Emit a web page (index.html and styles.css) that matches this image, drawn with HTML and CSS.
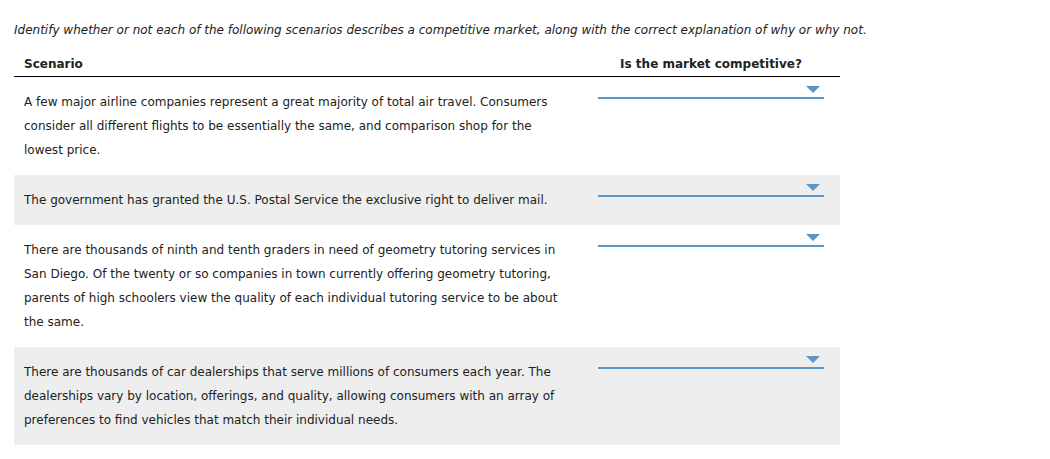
FILE: index.html
```html
<!DOCTYPE html>
<html lang="en">
<head>
  <meta charset="UTF-8">
  <title>Competitive Markets</title>
  <link rel="stylesheet" href="styles.css">
</head>
<body>
  <p class="intro">Identify whether or not each of the following scenarios describes a competitive market, along with the correct explanation of why or why not.</p>

  <table class="scenarios">
    <thead>
      <tr>
        <th class="col-scenario">Scenario</th>
        <th class="col-answer">Is the market competitive?</th>
      </tr>
    </thead>
    <tbody>
      <tr>
        <td class="col-scenario">A few major airline companies represent a great majority of total air travel. Consumers consider all different flights to be essentially the same, and comparison shop for the lowest price.</td>
        <td class="col-answer"><div class="dropdown"><span class="caret"></span></div></td>
      </tr>
      <tr class="shaded">
        <td class="col-scenario">The government has granted the U.S. Postal Service the exclusive right to deliver mail.</td>
        <td class="col-answer"><div class="dropdown"><span class="caret"></span></div></td>
      </tr>
      <tr>
        <td class="col-scenario">There are thousands of ninth and tenth graders in need of geometry tutoring services in San Diego. Of the twenty or so companies in town currently offering geometry tutoring, parents of high schoolers view the quality of each individual tutoring service to be about the same.</td>
        <td class="col-answer"><div class="dropdown"><span class="caret"></span></div></td>
      </tr>
      <tr class="shaded">
        <td class="col-scenario">There are thousands of car dealerships that serve millions of consumers each year. The dealerships vary by location, offerings, and quality, allowing consumers with an array of preferences to find vehicles that match their individual needs.</td>
        <td class="col-answer"><div class="dropdown"><span class="caret"></span></div></td>
      </tr>
    </tbody>
  </table>
</body>
</html>
```

FILE: styles.css
```css
body {
  margin: 0;
  font-family: Verdana, "DejaVu Sans", sans-serif;
  font-size: 12px;
  color: #222;
  background: #fff;
}
.intro {
  margin: 21px 14px 0;
  line-height: 18px;
  font-style: italic;
}
.scenarios {
  margin: 11px 0 0 14px;
  width: 826px;
  border-collapse: collapse;
  table-layout: fixed;
}
th, td {
  box-sizing: border-box;
}
.col-scenario {
  width: 566px;
}
.col-answer {
  width: 260px;
}
th {
  padding: 5px 0 3px;
  line-height: 18px;
  font-weight: bold;
  border-bottom: 1px solid #000;
}
th.col-scenario {
  text-align: left;
  padding-left: 10px;
}
th.col-answer {
  text-align: center;
  padding-left: 2px;
}
td {
  vertical-align: top;
  line-height: 24px;
}
td.col-scenario {
  padding: 13px 14px 13px 10px;
}
td.col-answer {
  padding: 9px 16px 0 18px;
}
.shaded td {
  background: #eee;
}
.dropdown {
  display: flex;
  justify-content: flex-end;
  padding: 0 4px 4px 0;
  border-bottom: 2px solid #5b96c7;
}
.caret {
  width: 0;
  height: 0;
  border-left: 7px solid transparent;
  border-right: 7px solid transparent;
  border-top: 7px solid #5b96c7;
}
```
